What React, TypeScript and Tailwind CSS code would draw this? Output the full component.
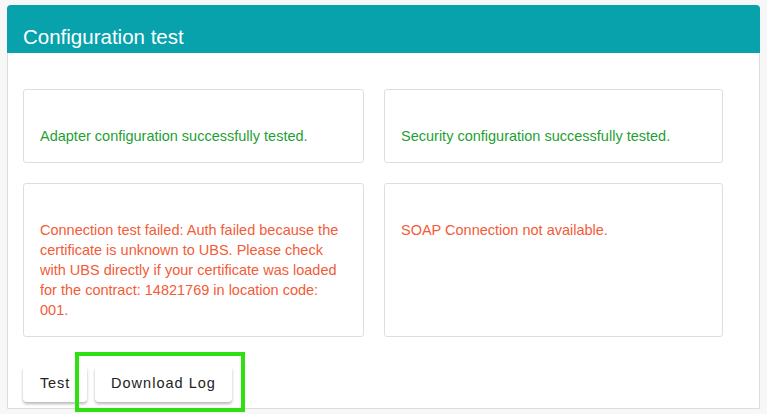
import React from "react";

const font = { fontFamily: '"Liberation Sans", Arial, sans-serif' };

function Box({ text, color }: { text: string; color: string }) {
  return (
    <div className="rounded-[3px] border border-[#dedede] bg-white pl-[16px] pr-[16px] pt-[36px] pb-[16px]">
      <p className={`text-[14.5px] leading-[20px] ${color}`}>{text}</p>
    </div>
  );
}

export default function App() {
  return (
    <div className="min-h-[414px] bg-[#f7f7f7] px-[7px] pt-[5px] pb-[5px]" style={font}>
      <div className="h-[404px] rounded-t-[4px] border border-[#dcdcdc] bg-white flex flex-col">
        <div className="h-[48px] -mx-px -mt-px rounded-t-[4px] bg-[#07a2ab] px-[16px] pt-[20px]">
          <h1 className="text-[20.5px] leading-[24px] text-white">Configuration test</h1>
        </div>
        <div className="flex-1 pl-[15px] pr-[36px] pt-[36px]">
          <div className="grid grid-cols-[341px_1fr] gap-x-[20px] gap-y-[20px]">
            <Box text="Adapter configuration successfully tested." color="text-[#1f9f33]" />
            <Box text="Security configuration successfully tested." color="text-[#1f9f33]" />
            <Box
              text="Connection test failed: Auth failed because the certificate is unknown to UBS. Please check with UBS directly if your certificate was loaded for the contract: 14821769 in location code: 001."
              color="text-[#f45b37]"
            />
            <Box text="SOAP Connection not available." color="text-[#f45b37]" />
          </div>
          <div className="mt-[29px] flex gap-[8px]">
            <button className="h-[36px] w-[64px] rounded-[4px] bg-white text-[14.5px] tracking-[0.06em] text-[#222] shadow-[0_2px_3px_rgba(0,0,0,0.28)]">
              Test
            </button>
            <div className="relative">
              <button className="h-[36px] w-[137px] rounded-[4px] bg-white text-[14.5px] tracking-[0.07em] text-[#222] shadow-[0_2px_3px_rgba(0,0,0,0.28)]">
                Download Log
              </button>
              <div className="pointer-events-none absolute left-[-20px] top-[-14px] h-[60px] w-[170px] border-[4px] border-[#2ee00f]" />
            </div>
          </div>
        </div>
      </div>
    </div>
  );
}
